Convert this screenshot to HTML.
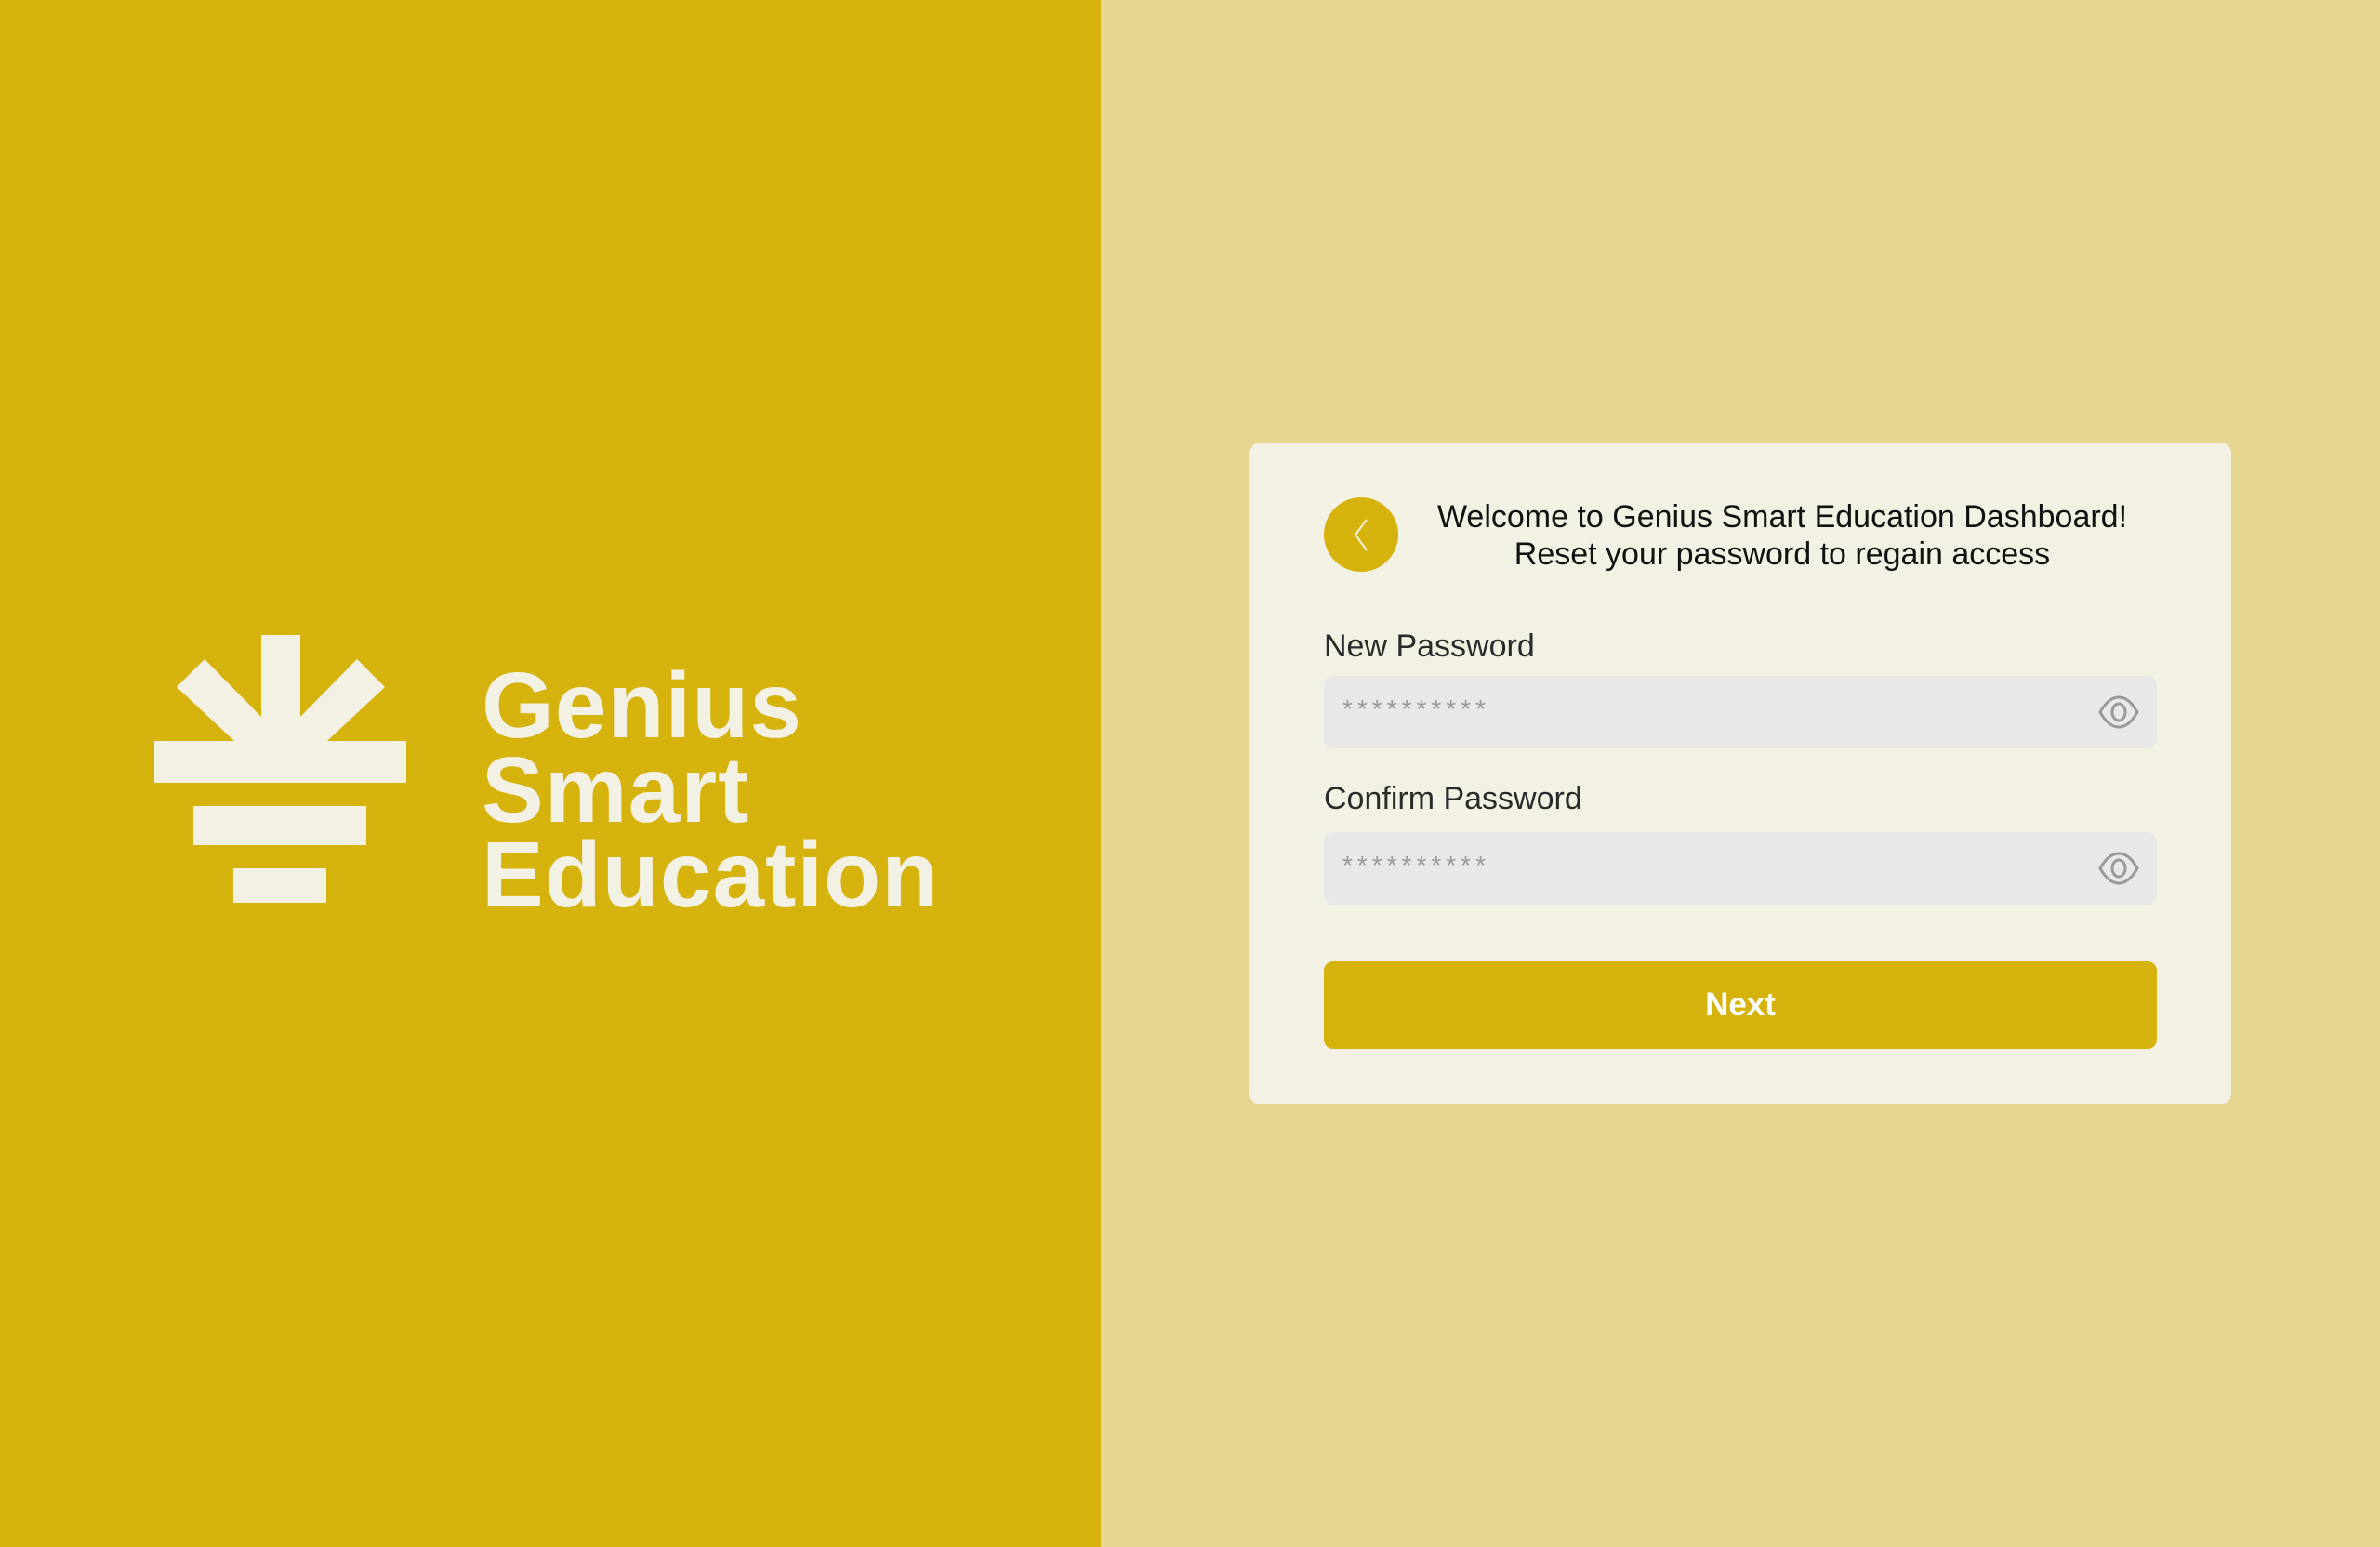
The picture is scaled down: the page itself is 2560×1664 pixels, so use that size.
<!DOCTYPE html>
<html><head><meta charset="utf-8"><style>
*{margin:0;padding:0;box-sizing:border-box}
html,body{width:2560px;height:1664px;overflow:hidden;font-family:"Liberation Sans",sans-serif}
.left{position:absolute;left:0;top:0;width:1184px;height:1664px;background:#D6B20D}
.right{position:absolute;left:1184px;top:0;width:1376px;height:1664px;background:#E7D592}
.brand{position:absolute;left:518px;top:714px;color:#F3F1E3;font-weight:bold;font-size:100px;line-height:91px;letter-spacing:1px}
.card{position:absolute;left:1344px;top:476px;width:1056px;height:712px;background:#F3F1E3;border-radius:12px}
.back{position:absolute;left:1424px;top:535px;width:80px;height:80px;border-radius:50%;background:#D6B20D}
.title{position:absolute;left:1480px;width:874px;top:536px;text-align:center;font-size:34px;line-height:40px;color:#111}
.label{position:absolute;left:1424px;font-size:34px;color:#2a2a2a}
.input{position:absolute;left:1424px;width:896px;height:78px;background:#E8E8E8;border-radius:10px}
.input span{position:absolute;left:20px;top:20px;font-size:28px;color:#999;letter-spacing:5px}
.input svg{position:absolute;right:18px;top:20px}
.btn{position:absolute;left:1424px;top:1034px;width:896px;height:94px;background:#D6B20D;border-radius:10px;color:#fff;font-weight:bold;font-size:35px;text-align:center;line-height:94px}
</style></head><body>
<div class="left">
<svg width="1184" height="1664" style="position:absolute;left:0;top:0">
<g fill="#F3F1E3">
<rect x="281" y="683" width="42" height="114"/>
<polygon points="190,739 220,709 282,772 282,797 252,797"/>
<polygon points="414,739 384,709 322,772 322,797 352,797"/>
<rect x="166" y="797" width="271" height="45"/>
<rect x="208" y="867" width="186" height="42"/>
<rect x="251" y="934" width="100" height="37"/>
</g></svg>
<div class="brand">Genius<br>Smart<br>Education</div>
</div>
<div class="right"></div>
<div class="card"></div>
<div class="back"><svg width="80" height="80"><path d="M46 24 L34 40 L46 57" fill="none" stroke="#F3F1E3" stroke-width="2"/></svg></div>
<div class="title">Welcome to Genius Smart Education Dashboard!<br>Reset your password to regain access</div>
<div class="label" style="top:676px">New Password</div>
<div class="input" style="top:727px"><span>**********</span>
<svg width="46" height="38" viewBox="0 0 46 38"><path d="M3 19 Q12 3 23 3 Q34 3 43 19 Q34 35 23 35 Q12 35 3 19Z" fill="none" stroke="#999" stroke-width="3"/><ellipse cx="23" cy="19" rx="7" ry="9" fill="none" stroke="#999" stroke-width="3"/></svg></div>
<div class="label" style="top:840px">Confirm Password</div>
<div class="input" style="top:895px"><span>**********</span>
<svg width="46" height="38" viewBox="0 0 46 38"><path d="M3 19 Q12 3 23 3 Q34 3 43 19 Q34 35 23 35 Q12 35 3 19Z" fill="none" stroke="#999" stroke-width="3"/><ellipse cx="23" cy="19" rx="7" ry="9" fill="none" stroke="#999" stroke-width="3"/></svg></div>
<div class="btn">Next</div>
</body></html>
